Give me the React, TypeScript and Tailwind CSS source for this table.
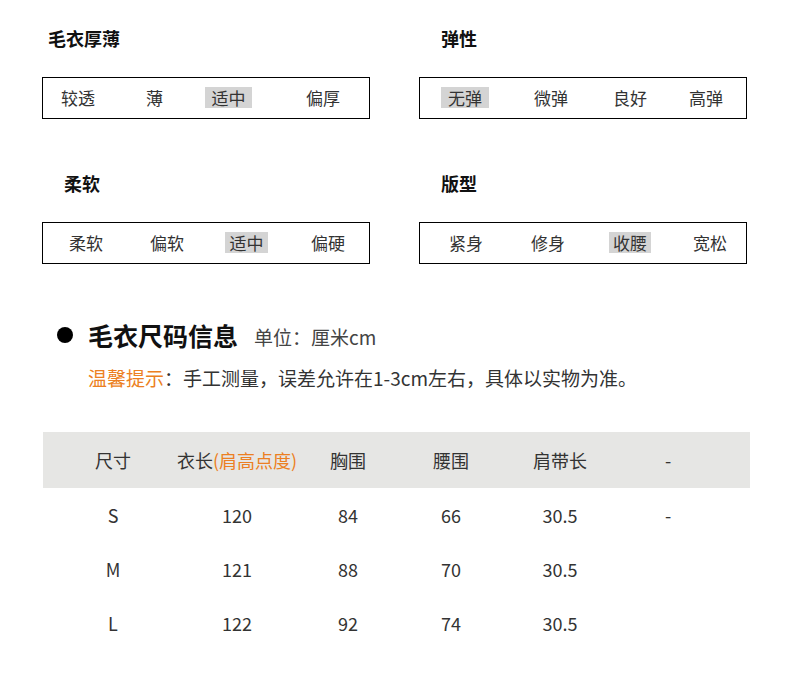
import React from "react";

const FONT = { fontFamily: '"Noto Sans CJK SC", "Noto Sans", sans-serif' };

function Box({ title, titlePad, pl, items }: { title: string; titlePad: string; pl: string; items: React.ReactNode }) {
  return (
    <div className="w-[328px] flex flex-col">
      <div className={`h-[24px] leading-[24px] text-[18px] font-bold text-[#111] ${titlePad}`}>{title}</div>
      <div className={`mt-[27px] h-[42px] border border-black flex items-center pb-[2px] ${pl}`}>{items}</div>
    </div>
  );
}

const T = "text-[17px] leading-[21px] text-[#333] whitespace-nowrap";
const H = "text-[17px] leading-[21px] text-[#333] whitespace-nowrap bg-[#d4d4d4] h-[21px] flex items-center justify-center";

export default function App() {
  return (
    <div className="w-[790px] h-[693px] bg-white overflow-hidden" style={FONT}>
      <div className="pt-[26px] pl-[42px]">
        <div className="flex gap-[49px]">
          <Box
            title="毛衣厚薄"
            titlePad="pl-[6px]"
            pl="pl-[18px]"
            items={
              <>
                <span className={T}>较透</span>
                <span className={`${T} ml-[51px]`}>薄</span>
                <span className={`${H} ml-[42px] w-[47px]`}>适中</span>
                <span className={`${T} ml-[54px]`}>偏厚</span>
              </>
            }
          />
          <Box
            title="弹性"
            titlePad="pl-[22px]"
            pl="pl-[21px]"
            items={
              <>
                <span className={`${H} w-[48px]`}>无弹</span>
                <span className={`${T} ml-[45px]`}>微弹</span>
                <span className={`${T} ml-[45px]`}>良好</span>
                <span className={`${T} ml-[42px]`}>高弹</span>
              </>
            }
          />
        </div>
        <div className="flex gap-[49px] mt-[52px]">
          <Box
            title="柔软"
            titlePad="pl-[22px]"
            pl="pl-[26px]"
            items={
              <>
                <span className={T}>柔软</span>
                <span className={`${T} ml-[47px]`}>偏软</span>
                <span className={`${H} ml-[41px] w-[43px]`}>适中</span>
                <span className={`${T} ml-[43px]`}>偏硬</span>
              </>
            }
          />
          <Box
            title="版型"
            titlePad="pl-[22px]"
            pl="pl-[29px]"
            items={
              <>
                <span className={T}>紧身</span>
                <span className={`${T} ml-[48px]`}>修身</span>
                <span className={`${H} ml-[44px] w-[42px]`}>收腰</span>
                <span className={`${T} ml-[42px]`}>宽松</span>
              </>
            }
          />
        </div>
      </div>

      <div className="mt-[55px] pl-[57px] flex items-center h-[32px]">
        <span className="w-[16px] h-[16px] rounded-full bg-black" />
        <span className="ml-[15px] text-[25px] leading-[32px] font-bold text-[#111]">毛衣尺码信息</span>
        <span className="ml-[16px] text-[19px] leading-[32px] text-[#444] mt-[3px]">单位：厘米cm</span>
      </div>
      <div className="mt-[14px] pl-[88px] h-[26px] text-[19px] leading-[26px] text-[#333] whitespace-nowrap">
        <span className="text-[#ec7f22]">温馨提示</span>：手工测量，误差允许在1-3cm左右，具体以实物为准。
      </div>

      <div className="mt-[41px] ml-[43px] w-[707px] text-[18px] text-[#333]">
        <div className="grid grid-cols-[140px_108px_114px_92px_126px_90px_1fr] h-[56px] bg-[#e6e6e4] items-center">
          <div className="flex justify-center whitespace-nowrap">尺寸</div>
          <div className="flex justify-center whitespace-nowrap">
            衣长<span className="text-[#ec7f22]">(肩高点度)</span>
          </div>
          <div className="flex justify-center whitespace-nowrap">胸围</div>
          <div className="flex justify-center whitespace-nowrap">腰围</div>
          <div className="flex justify-center whitespace-nowrap">肩带长</div>
          <div className="flex justify-center whitespace-nowrap">-</div>
          <div />
        </div>
        {[
          ["S", "120", "84", "66", "30.5", "-"],
          ["M", "121", "88", "70", "30.5", ""],
          ["L", "122", "92", "74", "30.5", ""],
        ].map((r) => (
          <div key={r[0]} className="grid grid-cols-[140px_108px_114px_92px_126px_90px_1fr] h-[54px] items-center">
            {r.map((c, i) => (
              <div key={i} className="flex justify-center whitespace-nowrap">
                {c}
              </div>
            ))}
            <div />
          </div>
        ))}
      </div>
    </div>
  );
}
